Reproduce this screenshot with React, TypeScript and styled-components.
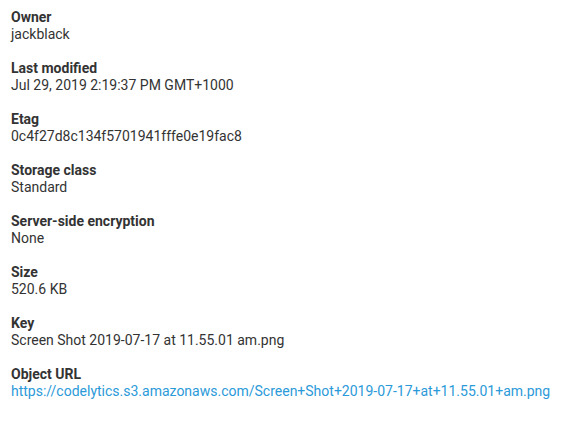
import React from "react";
import styled, { createGlobalStyle } from "styled-components";

const Global = createGlobalStyle`
  html, body { margin: 0; padding: 0; background: #fff; }
  body { font-family: Roboto, "Noto Sans", sans-serif; font-size: 14px; color: #333; }
`;

const List = styled.dl`
  margin: 0;
  padding: 9px 11px;
  display: flex;
  flex-direction: column;
  gap: 17px;
`;

const Item = styled.div`
  display: flex;
  flex-direction: column;
`;

const Label = styled.dt`
  font-weight: 700;
  line-height: 17px;
  color: #333;
`;

const Value = styled.dd`
  margin: 0;
  line-height: 17px;
  color: #333;
`;

const Link = styled.a`
  color: #2b9ad9;
  text-decoration: none;
`;

const items: { label: string; value: string; href?: boolean }[] = [
  { label: "Owner", value: "jackblack" },
  { label: "Last modified", value: "Jul 29, 2019 2:19:37 PM GMT+1000" },
  { label: "Etag", value: "0c4f27d8c134f5701941fffe0e19fac8" },
  { label: "Storage class", value: "Standard" },
  { label: "Server-side encryption", value: "None" },
  { label: "Size", value: "520.6 KB" },
  { label: "Key", value: "Screen Shot 2019-07-17 at 11.55.01 am.png" },
  {
    label: "Object URL",
    value: "https://codelytics.s3.amazonaws.com/Screen+Shot+2019-07-17+at+11.55.01+am.png",
    href: true,
  },
];

export default function App() {
  return (
    <>
      <Global />
      <List>
        {items.map((it) => (
          <Item key={it.label}>
            <Label>{it.label}</Label>
            <Value>{it.href ? <Link href="#">{it.value}</Link> : it.value}</Value>
          </Item>
        ))}
      </List>
    </>
  );
}
